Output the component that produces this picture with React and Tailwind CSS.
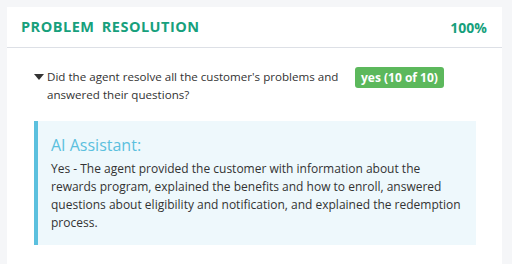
export default function App() {
  return (
    <div className="min-h-screen bg-[#f5f6f8] px-[7px] pt-[7px]" style={{ fontFamily: '"Open Sans", sans-serif' }}>
      <div className="bg-white min-h-[257px] w-[495px]">
        <div className="flex items-center justify-between h-[41px] pl-[14px] pr-[15px] border-b border-[#dde0e6]">
          <h2 className="text-[14.5px] font-bold tracking-[0.5px] [word-spacing:3px] text-[#17a07c]">PROBLEM RESOLUTION</h2>
          <span className="text-[14px] font-bold text-[#17a07c]">100%</span>
        </div>
        <div className="pl-[27px] pt-[20px]">
          <div className="flex items-start">
            <svg width="10" height="6" viewBox="0 0 10 6" className="mt-[6px] mr-[3px] shrink-0">
              <path d="M0 0 L10 0 L5 6 Z" fill="#333" />
            </svg>
            <p className="text-[11.6px] leading-[18px] text-[#333] w-[296px]">
              Did the agent resolve all the customer's problems and answered their questions?
            </p>
            <span className="ml-[12px] mt-[-1px] h-[21px] px-[6px] rounded-[3px] bg-[#5cb85c] text-white text-[12px] font-bold leading-[21px]">
              yes (10 of 10)
            </span>
          </div>
          <div className="mt-[17px] w-[442px] bg-[#eef8fc] border-l-4 border-[#5bc0de] pl-[13px] pr-[14px] pt-[12px] pb-[13px]">
            <h3 className="text-[16px] leading-[24px] text-[#5bc0de]">AI Assistant:</h3>
            <p className="mt-[3px] text-[12px] leading-[18px] text-[#333]">
              Yes - The agent provided the customer with information about the rewards program, explained the benefits and how to enroll, answered questions about eligibility and notification, and explained the redemption process.
            </p>
          </div>
        </div>
      </div>
    </div>
  )
}
